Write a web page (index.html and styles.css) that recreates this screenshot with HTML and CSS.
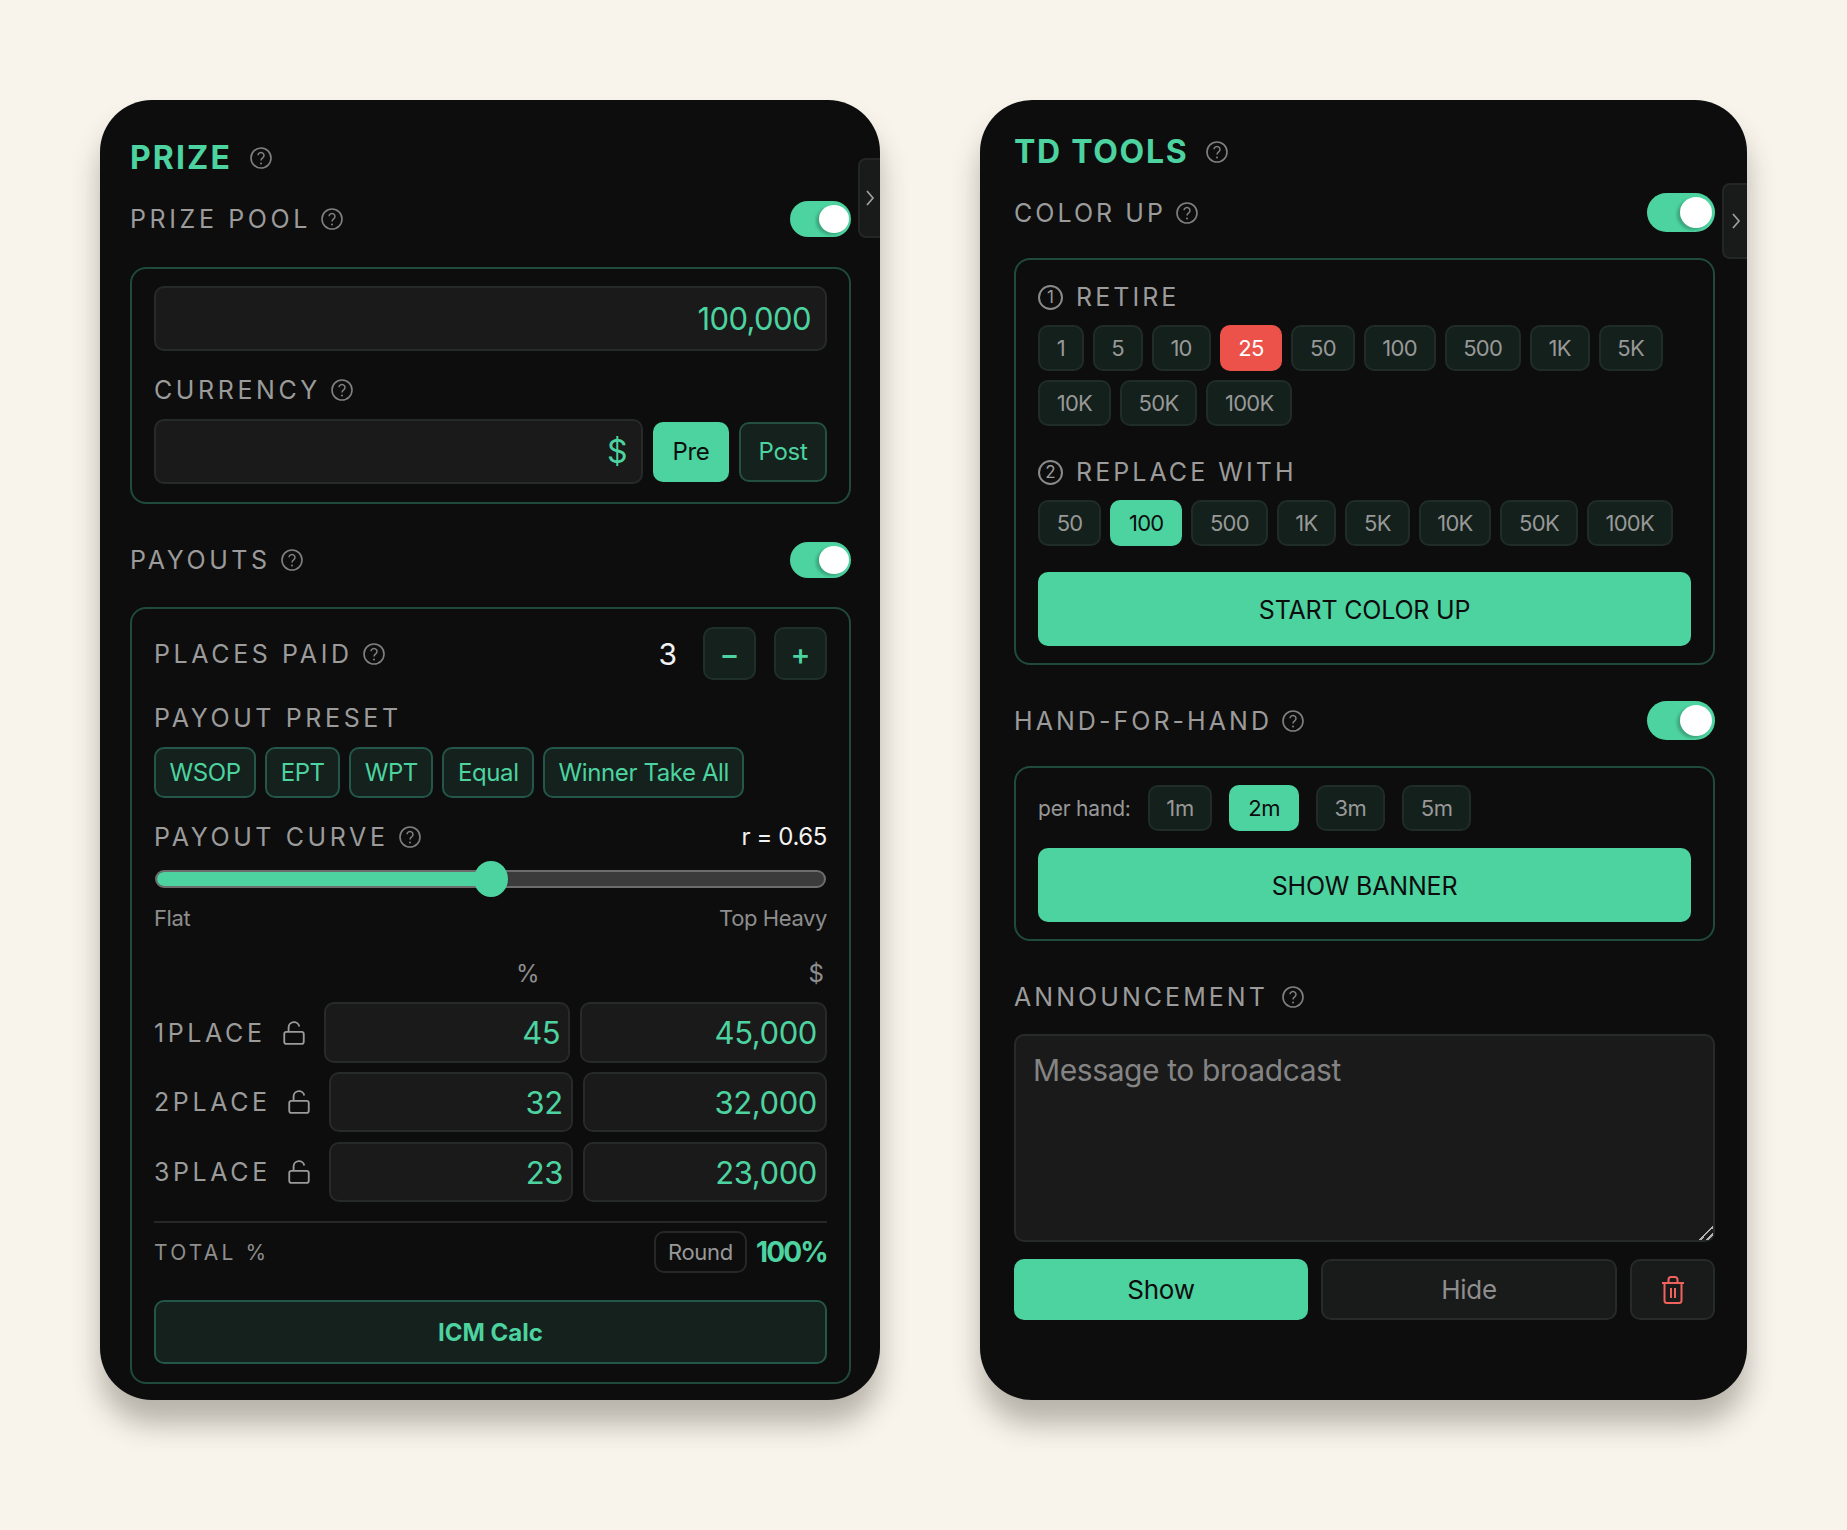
FILE: index.html
```html
<!DOCTYPE html>
<html lang="en">
<head>
<meta charset="utf-8">
<title>Prize and TD Tools</title>
<link rel="stylesheet" href="styles.css">
</head>
<body>
<svg class="defs" width="0" height="0" aria-hidden="true">
  <symbol id="help" viewBox="0 0 22 22">
    <circle cx="11" cy="11" r="10" fill="none" stroke="currentColor" stroke-width="1.6"/>
    <path d="M8 8.300a3 3 0 1 1 4.700 2.600c-1.100 .8-1.700 1.300-1.700 2.700" fill="none" stroke="currentColor" stroke-width="1.5"/>
    <circle cx="11" cy="16.400" r="1" fill="currentColor"/>
  </symbol>
  <symbol id="lock" viewBox="0 0 24 24">
    <rect x="3" y="11" width="18" height="11" rx="2" fill="none" stroke="currentColor" stroke-width="1.7"/>
    <path d="M7 11V7a5 5 0 0 1 9.900-1" fill="none" stroke="currentColor" stroke-width="1.7"/>
  </symbol>
  <symbol id="chev" viewBox="0 0 10 18">
    <path d="M2 2l6 7-6 7" fill="none" stroke="currentColor" stroke-width="1.7"/>
  </symbol>
</svg>

<main class="stage">
  <section class="panel panel-prize">
    <button class="tab tab-prize"><svg class="chev"><use href="#chev"/></svg></button>
    <div class="title-row prize-title">
      <h1 class="title">PRIZE</h1>
      <svg class="help title-help"><use href="#help"/></svg>
    </div>
    <div class="toggle-row pool-row">
      <span class="label">PRIZE POOL</span><svg class="help"><use href="#help"/></svg>
      <span class="toggle"><i class="knob"></i></span>
    </div>
    <div class="group pool-group">
      <div class="field big-field">100,000</div>
      <div class="label-row currency-label"><span class="label">CURRENCY</span><svg class="help"><use href="#help"/></svg></div>
      <div class="currency-row">
        <div class="field big-field currency-field">$</div>
        <button class="btn-solid pre">Pre</button>
        <button class="btn-tint post">Post</button>
      </div>
    </div>
    <div class="toggle-row payouts-row">
      <span class="label">PAYOUTS</span><svg class="help"><use href="#help"/></svg>
      <span class="toggle"><i class="knob"></i></span>
    </div>
    <div class="group payouts-group">
      <div class="places-row">
        <span class="label">PLACES PAID</span><svg class="help"><use href="#help"/></svg>
        <span class="places-num">3</span>
        <button class="step">−</button>
        <button class="step">+</button>
      </div>
      <div class="label-row preset-label"><span class="label">PAYOUT PRESET</span></div>
      <div class="pills">
        <button class="pill">WSOP</button>
        <button class="pill">EPT</button>
        <button class="pill">WPT</button>
        <button class="pill">Equal</button>
        <button class="pill">Winner Take All</button>
      </div>
      <div class="label-row curve-label">
        <span class="label">PAYOUT CURVE</span><svg class="help"><use href="#help"/></svg>
        <span class="r-value">r = 0.65</span>
      </div>
      <div class="slider"><div class="slider-fill"></div><div class="slider-thumb"></div></div>
      <div class="slider-ends"><span>Flat</span><span>Top Heavy</span></div>
      <div class="col-heads"><span>%</span><span>$</span></div>
      <div class="place-row first">
        <span class="label place-label">1PLACE</span><svg class="lock"><use href="#lock"/></svg>
        <div class="field val">45</div><div class="field val">45,000</div>
      </div>
      <div class="place-row">
        <span class="label place-label">2PLACE</span><svg class="lock"><use href="#lock"/></svg>
        <div class="field val">32</div><div class="field val">32,000</div>
      </div>
      <div class="place-row">
        <span class="label place-label">3PLACE</span><svg class="lock"><use href="#lock"/></svg>
        <div class="field val">23</div><div class="field val">23,000</div>
      </div>
      <div class="divider"></div>
      <div class="total-row">
        <span class="total-label">TOTAL %</span>
        <button class="round">Round</button>
        <strong class="total-val">100%</strong>
      </div>
      <button class="icm">ICM Calc</button>
    </div>
  </section>

  <section class="panel panel-tools">
    <button class="tab tab-tools"><svg class="chev"><use href="#chev"/></svg></button>
    <div class="title-row tools-title">
      <h1 class="title">TD TOOLS</h1>
      <svg class="help title-help"><use href="#help"/></svg>
    </div>
    <div class="toggle-row big colorup-row">
      <span class="label">COLOR UP</span><svg class="help"><use href="#help"/></svg>
      <span class="toggle"><i class="knob"></i></span>
    </div>
    <div class="group colorup-group">
      <div class="label-row retire-label"><span class="num">1</span><span class="label">RETIRE</span></div>
      <div class="chips">
        <button class="chip">1</button><button class="chip">5</button><button class="chip">10</button>
        <button class="chip red">25</button><button class="chip">50</button><button class="chip">100</button>
        <button class="chip">500</button><button class="chip">1K</button><button class="chip">5K</button>
        <button class="chip">10K</button><button class="chip">50K</button><button class="chip">100K</button>
      </div>
      <div class="label-row replace-label"><span class="num">2</span><span class="label">REPLACE WITH</span></div>
      <div class="chips">
        <button class="chip">50</button><button class="chip on">100</button><button class="chip">500</button>
        <button class="chip">1K</button><button class="chip">5K</button><button class="chip">10K</button>
        <button class="chip">50K</button><button class="chip">100K</button>
      </div>
      <button class="wide start">START COLOR UP</button>
    </div>
    <div class="toggle-row big hand-row">
      <span class="label">HAND-FOR-HAND</span><svg class="help"><use href="#help"/></svg>
      <span class="toggle"><i class="knob"></i></span>
    </div>
    <div class="group hand-group">
      <div class="per-row">
        <span class="per-label">per hand:</span>
        <button class="chip per">1m</button><button class="chip per on">2m</button>
        <button class="chip per">3m</button><button class="chip per">5m</button>
      </div>
      <button class="wide banner">SHOW BANNER</button>
    </div>
    <div class="label-row announce-label"><span class="label">ANNOUNCEMENT</span><svg class="help"><use href="#help"/></svg></div>
    <textarea class="message" placeholder="Message to broadcast"></textarea>
    <div class="actions">
      <button class="act show">Show</button>
      <button class="act hide">Hide</button>
      <button class="act trash">
        <svg class="trash-icon" viewBox="0 0 24 28" fill="none" stroke="currentColor" stroke-width="2">
          <path d="M1 7h22"/>
          <path d="M3.500 7v17.500a2.500 2.500 0 0 0 2.500 2.500h12a2.500 2.500 0 0 0 2.500-2.500V7"/>
          <path d="M7.500 7V3.500a2.500 2.500 0 0 1 2.500-2.500h4a2.500 2.500 0 0 1 2.500 2.500V7"/>
          <path d="M10 12v10M14 12v10"/>
        </svg>
      </button>
    </div>
  </section>
</main>
</body>
</html>
```

FILE: styles.css
```css
* { box-sizing: border-box; }
html, body { margin: 0; padding: 0; }
body {
  width: 1847px;
  height: 1530px;
  background: #f8f4ec;
  font-family: Inter, "Liberation Sans", sans-serif;
  color: #9b9b9b;
  overflow: hidden;
}
button { font-family: inherit; cursor: pointer; padding: 0; }
.defs { position: absolute; }

.stage { display: flex; gap: 100px; padding: 100px 0 0 100px; }

.panel {
  position: relative;
  height: 1300px;
  background: #0d0d0d;
  border-radius: 52px;
  box-shadow: 0 24px 28px rgba(50, 45, 30, .32);
}
.panel-prize { width: 780px; padding: 38px 29px 0 30px; }
.panel-tools { width: 767px; padding: 32px 32px 0 34px; }

.tab {
  position: absolute;
  right: 0;
  background: #191a1a;
  border: 2px solid #232625;
  border-right: 0;
  border-radius: 8px 0 0 8px;
  color: #a0a0a0;
  display: flex;
  align-items: center;
  justify-content: center;
}
.tab-prize { top: 58px; width: 22px; height: 80px; }
.tab-tools { top: 83px; width: 25px; height: 76px; }
.chev { width: 10px; height: 18px; }

.title-row { display: flex; align-items: center; height: 40px; }
.title {
  margin: 0;
  font-size: 32px;
  font-weight: 700;
  color: #4cd3a0;
  line-height: 40px;
}
.prize-title .title { letter-spacing: 2.1px; }
.tools-title .title { letter-spacing: 1.7px; }
.help { width: 22px; height: 22px; color: #808080; flex: none; margin-left: 10px; }
.title-help { margin-left: 18px; }

.label {
  font-size: 25px;
  letter-spacing: 3.6px;
  color: #9b9b9b;
  line-height: 30px;
  white-space: nowrap;
}
.panel-tools .label { letter-spacing: 3.05px; }
.label-row { display: flex; align-items: center; height: 30px; }

.toggle-row { display: flex; align-items: center; height: 36px; }
.toggle {
  position: relative;
  margin-left: auto;
  width: 61px;
  height: 36px;
  border-radius: 18px;
  background: #4cd3a0;
  flex: none;
}
.knob {
  position: absolute;
  top: 4px;
  right: 2px;
  width: 30px;
  height: 28px;
  border-radius: 50%;
  background: #fff;
  box-shadow: -3px 2px 3px rgba(0, 0, 0, .22);
}
.toggle-row.big { height: 39px; }
.big .toggle { width: 68px; height: 39px; border-radius: 20px; }
.big .knob { top: 4px; right: 3px; width: 32px; height: 31px; }

.pool-row { margin-top: 23px; }
.payouts-row { margin-top: 38px; }
.colorup-row { margin-top: 21px; }
.hand-row { margin-top: 36px; }

.group { border: 2px solid #1f4a3d; border-radius: 16px; }
.pool-group { margin-top: 30px; height: 237px; padding: 17px 22px; }
.payouts-group { margin-top: 29px; height: 777px; padding: 18px 22px; }
.colorup-group { margin-top: 26px; height: 407px; padding: 22px 22px 0; }
.hand-group { margin-top: 26px; height: 175px; padding: 17px 22px; }

.field {
  background: #1a1a1a;
  border: 2px solid #262a28;
  border-radius: 10px;
  color: #4cd3a0;
  text-align: right;
}
.big-field {
  height: 65px;
  padding-right: 14px;
  font-size: 31px;
  line-height: 61px;
  letter-spacing: -.6px;
}
.currency-label { margin-top: 24px; }
.currency-row { display: flex; align-items: center; gap: 10px; margin-top: 14px; }
.currency-field { flex: 1; font-size: 32px; }
.btn-solid, .btn-tint { height: 60px; border-radius: 10px; font-size: 24px; letter-spacing: -.3px; }
.btn-solid { background: #4cd3a0; border: 0; color: #0d0d0d; }
.pre { width: 76px; }
.btn-tint { background: #14211c; border: 2px solid #24513f; color: #4cd3a0; }
.post { width: 88px; }

.places-row { display: flex; align-items: center; height: 53px; }
.places-num { margin-left: auto; margin-right: 26px; color: #f2f2f2; font-size: 30px; }
.step {
  width: 53px;
  height: 53px;
  background: #14211c;
  border: 2px solid #1f2f29;
  border-radius: 10px;
  color: #4cd3a0;
  font-size: 30px;
  font-weight: 500;
  line-height: 1;
}
.step + .step { margin-left: 18px; }

.preset-label { margin-top: 23px; }
.pills { display: flex; gap: 9px; margin-top: 14px; }
.pill {
  height: 51px;
  padding: 0 13.500px;
  background: #14211c;
  border: 2px solid #24564a;
  border-radius: 10px;
  color: #4cd3a0;
  font-size: 24px;
  letter-spacing: -.4px;
  white-space: nowrap;
}
.curve-label { margin-top: 24px; }
.r-value { margin-left: auto; padding-bottom: 2px; color: #f2f2f2; font-size: 24px; letter-spacing: -.4px; }

.slider {
  position: relative;
  margin: 18px 1px 0;
  height: 18px;
  border-radius: 9px;
  background: #3a3b3a;
  border: 2px solid #6d6d6d;
}
.slider-fill { width: 50%; height: 100%; border-radius: 7px 0 0 7px; background: #4cd3a0; }
.slider-thumb {
  position: absolute;
  left: 317px;
  top: -11px;
  width: 34px;
  height: 36px;
  border-radius: 50%;
  background: #4cd3a0;
}
.slider-ends {
  display: flex;
  justify-content: space-between;
  margin-top: 16px;
  height: 28px;
  line-height: 28px;
  font-size: 22px;
  letter-spacing: -.4px;
  color: #8e8e8e;
}
.col-heads {
  display: flex;
  justify-content: flex-end;
  gap: 269px;
  margin-top: 28px;
  padding-right: 3px;
  height: 28px;
  line-height: 28px;
  font-size: 24px;
  color: #8e8e8e;
}
.place-row { display: flex; align-items: center; gap: 10px; height: 60px; margin-top: 10px; }
.place-row.first { margin-top: 14px; height: 61px; }
.place-row.first + .place-row { margin-top: 9px; }
.place-label { margin-right: 5px; }
.lock { width: 26px; height: 26px; color: #9b9b9b; flex: none; margin-right: 7px; }
.val {
  flex: 1;
  min-width: 0;
  height: 100%;
  padding-right: 8px;
  font-size: 31px;
  line-height: 57px;
  letter-spacing: -.4px;
}
.divider { margin-top: 19px; height: 2px; background: #262827; }
.total-row { display: flex; align-items: center; margin-top: 8px; height: 42px; }
.total-label { font-size: 21px; letter-spacing: 3.2px; color: #8e8e8e; margin-right: auto; }
.round {
  width: 93px;
  height: 42px;
  background: transparent;
  border: 2px solid #262827;
  border-radius: 10px;
  color: #989898;
  font-size: 22px;
  letter-spacing: -.3px;
}
.total-val { margin-left: 9px; color: #4cd3a0; font-size: 28px; font-weight: 700; letter-spacing: -1.8px; }
.icm {
  display: block;
  width: 100%;
  height: 64px;
  margin-top: 27px;
  background: #14211c;
  border: 2px solid #24564a;
  border-radius: 10px;
  color: #4cd3a0;
  font-size: 24px;
  font-weight: 700;
}

.num {
  width: 25px;
  height: 25px;
  margin-right: 13px;
  border: 2px solid #8a8a8a;
  border-radius: 50%;
  font-size: 17px;
  line-height: 21px;
  text-align: center;
  color: #9b9b9b;
  flex: none;
}
.chips { display: flex; flex-wrap: wrap; gap: 9px; margin-top: 13px; }
.chip {
  height: 46px;
  padding: 0 16.700px;
  background: #14201b;
  border: 2px solid #1f2c27;
  border-radius: 10px;
  color: #989898;
  font-size: 22px;
  letter-spacing: -.7px;
}
.chip.red { background: #ec5249; border-color: #ec5249; color: #fff; }
.chip.on { background: #4cd3a0; border-color: #4cd3a0; color: #0d0d0d; }
.replace-label { margin-top: 31px; }

.wide {
  display: block;
  width: 100%;
  height: 74px;
  padding-top: 1px;
  background: #4cd3a0;
  border: 0;
  border-radius: 10px;
  color: #0d0d0d;
  font-size: 25px;
  letter-spacing: -.2px;
}
.start { margin-top: 26px; }
.banner { margin-top: 17px; }

.per-row { display: flex; align-items: center; gap: 17px; }
.per-label { font-size: 21px; color: #989898; letter-spacing: -.2px; }
.chip.per { padding: 0 16.700px; letter-spacing: -.4px; }

.announce-label { margin-top: 41px; }
.announce-label .help { margin-left: 14px; }
.message {
  display: block;
  width: 100%;
  height: 208px;
  margin-top: 22px;
  padding: 16px 17px;
  background: #1a1a1a;
  border: 2px solid #262a28;
  border-radius: 10px;
  font-family: inherit;
  font-size: 30px;
  letter-spacing: -.4px;
  color: #9b9b9b;
  outline: none;
}
.message::placeholder { color: #848484; opacity: 1; }
.message::-webkit-resizer {
  background: linear-gradient(135deg, transparent 52%, #b4b4b4 52% 60%, transparent 60% 76%, #b4b4b4 76% 84%, transparent 84%);
}

.actions { display: flex; gap: 13px; margin-top: 17px; }
.act { height: 61px; border-radius: 10px; font-size: 26px; letter-spacing: -.3px; }
.show { width: 294px; background: #4cd3a0; border: 0; color: #0d0d0d; }
.hide { width: 296px; background: #191a1a; border: 2px solid #262a28; color: #8e8e8e; }
.trash { width: 85px; background: #191a1a; border: 2px solid #262a28; color: #f0635d; display: flex; align-items: center; justify-content: center; }
.trash-icon { width: 24px; height: 28px; }
```
